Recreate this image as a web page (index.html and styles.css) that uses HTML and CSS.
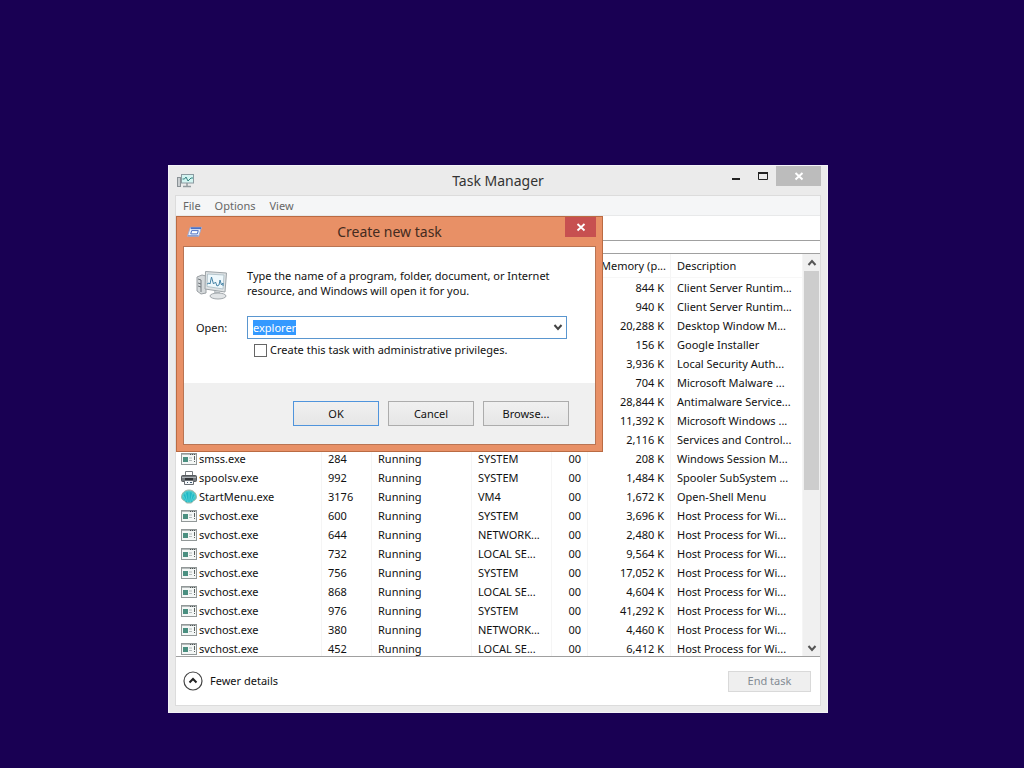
FILE: index.html
```html
<!DOCTYPE html>
<html lang="en">
<head>
<meta charset="utf-8">
<title>Task Manager</title>
<link rel="stylesheet" href="styles.css">
</head>
<body>
<svg class="defs" width="0" height="0" aria-hidden="true">
  <symbol id="app" viewBox="0 0 16 12">
    <rect x="0.5" y="0.5" width="15" height="11" fill="#f4f7f6" stroke="#929898"/>
    <path d="M1 1.500h14" stroke="#b4baba"/>
    <path d="M9 1.500h1M11 1.500h1M13 1.500h1" stroke="#4f5555"/>
    <rect x="2" y="4" width="5" height="5" fill="#4a8f80"/>
    <path d="M8 5h3M8 7.500h3" stroke="#b5bcbc"/>
    <path d="M13.500 3v4M13.500 8v1" stroke="#59605f"/>
  </symbol>
  <symbol id="printer" viewBox="0 0 16 16">
    <path d="M4.500 6V1.500h7V6" fill="#fff" stroke="#777c80"/>
    <rect x="0.500" y="5.500" width="15" height="6" rx="1" fill="#74797d" stroke="#55595d"/>
    <path d="M1 7.500h14" stroke="#b0b5b9"/>
    <path d="M4 9h8" stroke="#303336" stroke-width="2"/>
    <path d="M3.500 10.500h9v4h-9z" fill="#f6f8fa" stroke="#6a6f74"/>
    <path d="M6 12.500h1M9 12.500h2" stroke="#3f5a70"/>
  </symbol>
  <symbol id="shell" viewBox="0 0 16 16">
    <path d="M8 1C4 1 .5 4 .5 8c0 2 1.500 3.500 3.500 4l1.500 2h5l1.500-2c2-.5 3.500-2 3.500-4C15.500 4 12 1 8 1z" fill="#4fc9cb" stroke="#a5b7a8"/>
    <path d="M3 6c2-4 8-4 10 0 1 3 0 5-2 7H5C3 11 2 9 3 6z" fill="#1fb9c6"/>
    <path d="M8 13V3M6.500 13L4.500 4M9.500 13l2-9M5 12L2.500 7M11 12l2.500-5" fill="none" stroke="#72dfdf" stroke-width=".6"/>
  </symbol>
</svg>
<main class="desktop">
  <section class="window" aria-label="Task Manager">
    <header class="titlebar">
      <svg class="title-icon" viewBox="0 0 17 15" aria-hidden="true">
        <rect x=".5" y="4.500" width="3" height="9" fill="#c9ced0" stroke="#8a9296"/>
        <rect x="4.500" y="1.500" width="12" height="8.500" fill="#d3f4f1" stroke="#8b9ba1"/>
        <path d="M5.500 6h2l1.500-2 2 4 2-2 1-1h2" fill="none" stroke="#34817f"/>
        <path d="M10 10v3M6 13.500h8" stroke="#929b9f" stroke-width="1.500"/>
      </svg>
      <h1 class="title">Task Manager</h1>
      <div class="controls">
        <button class="control" aria-label="Minimize"><svg viewBox="0 0 12 10" width="12" height="10"><path d="M2 8h8" stroke="#222" stroke-width="2"/></svg></button>
        <button class="control" aria-label="Maximize"><svg viewBox="0 0 12 10" width="12" height="10"><path d="M1.500 2h9v6.500h-9z" fill="none" stroke="#222"/><path d="M1 2h10" stroke="#222" stroke-width="2"/></svg></button>
        <button class="control control-close" aria-label="Close"><svg viewBox="0 0 10 10" width="10" height="10"><path d="M1.500 2l7 6.500M8.500 2l-7 6.500" stroke="#fff" stroke-width="2"/></svg></button>
      </div>
    </header>
    <div class="client">
      <nav class="menu"><button>File</button><button>Options</button><button>View</button></nav>
      <div class="tabs"></div>
      <div class="spacer"></div>
      <div class="list">
        <div class="list-view">
          <table class="tasks">
            <colgroup><col class="c-name"><col class="c-pid"><col class="c-status"><col class="c-user"><col class="c-cpu"><col class="c-mem"><col></colgroup>
            <thead><tr><th></th><th></th><th></th><th></th><th></th><th class="num">Memory (p...</th><th>Description</th></tr></thead>
            <tbody>
              <tr><td></td><td></td><td></td><td></td><td></td><td class="num">844 K</td><td>Client Server Runtim...</td></tr>
              <tr><td></td><td></td><td></td><td></td><td></td><td class="num">940 K</td><td>Client Server Runtim...</td></tr>
              <tr><td></td><td></td><td></td><td></td><td></td><td class="num">20,288 K</td><td>Desktop Window M...</td></tr>
              <tr><td></td><td></td><td></td><td></td><td></td><td class="num">156 K</td><td>Google Installer</td></tr>
              <tr><td></td><td></td><td></td><td></td><td></td><td class="num">3,936 K</td><td>Local Security Auth...</td></tr>
              <tr><td></td><td></td><td></td><td></td><td></td><td class="num">704 K</td><td>Microsoft Malware ...</td></tr>
              <tr><td></td><td></td><td></td><td></td><td></td><td class="num">28,844 K</td><td>Antimalware Service...</td></tr>
              <tr><td></td><td></td><td></td><td></td><td></td><td class="num">11,392 K</td><td>Microsoft Windows ...</td></tr>
              <tr><td></td><td></td><td></td><td></td><td></td><td class="num">2,116 K</td><td>Services and Control...</td></tr>
              <tr><td><span class="name"><svg><use href="#app"/></svg>smss.exe</span></td><td>284</td><td>Running</td><td>SYSTEM</td><td class="num">00</td><td class="num">208 K</td><td>Windows Session M...</td></tr>
              <tr><td><span class="name"><svg class="tall"><use href="#printer"/></svg>spoolsv.exe</span></td><td>992</td><td>Running</td><td>SYSTEM</td><td class="num">00</td><td class="num">1,484 K</td><td>Spooler SubSystem ...</td></tr>
              <tr><td><span class="name"><svg class="tall"><use href="#shell"/></svg>StartMenu.exe</span></td><td>3176</td><td>Running</td><td>VM4</td><td class="num">00</td><td class="num">1,672 K</td><td>Open-Shell Menu</td></tr>
              <tr><td><span class="name"><svg><use href="#app"/></svg>svchost.exe</span></td><td>600</td><td>Running</td><td>SYSTEM</td><td class="num">00</td><td class="num">3,696 K</td><td>Host Process for Wi...</td></tr>
              <tr><td><span class="name"><svg><use href="#app"/></svg>svchost.exe</span></td><td>644</td><td>Running</td><td>NETWORK...</td><td class="num">00</td><td class="num">2,480 K</td><td>Host Process for Wi...</td></tr>
              <tr><td><span class="name"><svg><use href="#app"/></svg>svchost.exe</span></td><td>732</td><td>Running</td><td>LOCAL SE...</td><td class="num">00</td><td class="num">9,564 K</td><td>Host Process for Wi...</td></tr>
              <tr><td><span class="name"><svg><use href="#app"/></svg>svchost.exe</span></td><td>756</td><td>Running</td><td>SYSTEM</td><td class="num">00</td><td class="num">17,052 K</td><td>Host Process for Wi...</td></tr>
              <tr><td><span class="name"><svg><use href="#app"/></svg>svchost.exe</span></td><td>868</td><td>Running</td><td>LOCAL SE...</td><td class="num">00</td><td class="num">4,604 K</td><td>Host Process for Wi...</td></tr>
              <tr><td><span class="name"><svg><use href="#app"/></svg>svchost.exe</span></td><td>976</td><td>Running</td><td>SYSTEM</td><td class="num">00</td><td class="num">41,292 K</td><td>Host Process for Wi...</td></tr>
              <tr><td><span class="name"><svg><use href="#app"/></svg>svchost.exe</span></td><td>380</td><td>Running</td><td>NETWORK...</td><td class="num">00</td><td class="num">4,460 K</td><td>Host Process for Wi...</td></tr>
              <tr><td><span class="name"><svg><use href="#app"/></svg>svchost.exe</span></td><td>452</td><td>Running</td><td>LOCAL SE...</td><td class="num">00</td><td class="num">6,412 K</td><td>Host Process for Wi...</td></tr>
            </tbody>
          </table>
        </div>
        <div class="scrollbar">
          <button aria-label="Scroll up"><svg viewBox="0 0 10 8" width="10" height="8"><path d="M1.500 6L5 2l3.500 4" fill="none" stroke="#555" stroke-width="2"/></svg></button>
          <div class="thumb"></div>
          <button class="down" aria-label="Scroll down"><svg viewBox="0 0 10 8" width="10" height="8"><path d="M1.500 2L5 6l3.500-4" fill="none" stroke="#555" stroke-width="2"/></svg></button>
        </div>
      </div>
      <footer class="footer">
        <button class="fewer"><svg viewBox="0 0 20 20" width="20" height="20"><circle cx="10" cy="10" r="9" fill="#fff" stroke="#444" stroke-width="1.200"/><path d="M6.500 11.500L10 8l3.500 3.500" fill="none" stroke="#222" stroke-width="2"/></svg>Fewer details</button>
        <button class="end" disabled>End task</button>
      </footer>
    </div>
  </section>

  <section class="dialog" role="dialog" aria-label="Create new task">
    <header class="dialog-bar">
      <svg class="run-icon" viewBox="0 0 16 12" aria-hidden="true">
        <path d="M3.500 1h12l-3 9.500H.5z" fill="#e9f1fc" stroke="#9fa9cf"/>
        <path d="M4 2h11" stroke="#4b70c4" stroke-width="2"/>
        <path d="M5 4.500h7l-1 3.500H4z" fill="#fff" stroke="#4168c0"/>
        <path d="M1 10h11" stroke="#6d87c8"/>
      </svg>
      <h2 class="title">Create new task</h2>
      <button class="dialog-close" aria-label="Close"><svg viewBox="0 0 10 10" width="10" height="10"><path d="M1.500 2l7 6.500M8.500 2l-7 6.500" stroke="#fff" stroke-width="1.800"/></svg></button>
    </header>
    <form class="dialog-client">
      <div class="dialog-body">
        <svg class="monitor" viewBox="0 0 32 30" aria-hidden="true">
          <path d="M1 7l5-2 4 1v17l-5 1-4-3z" fill="#d5d9db" stroke="#9a9fa3"/>
          <path d="M2 9l3 1v12M2 13l3 1M2 16l3 1" fill="none" stroke="#73797e"/>
          <path d="M9.500 1.500l21 1.500-1.500 19-20-3z" fill="#dfe3e5" stroke="#9da4a8"/>
          <path d="M11.500 4l16.500 1-1 14-16-2.500z" fill="#eef8fc" stroke="#b5c5cc"/>
          <path d="M11 14l2-1 1 1 1.500-7 2 7 2-2 1.500 4 2-1 1-5 1.500 5 1.500-2v3" fill="none" stroke="#4683a6"/>
          <path d="M18 21l6 1-.5 4h-5z" fill="#b8bec2"/>
          <ellipse cx="22" cy="26" rx="8" ry="3" fill="#e2e5e7" stroke="#a1a7ab"/>
        </svg>
        <p class="message">Type the name of a program, folder, document, or Internet resource, and Windows will open it for you.</p>
        <label class="open-label" for="open">Open:</label>
        <div class="combo">
          <input id="open" type="text" value="explorer" spellcheck="false" autocomplete="off">
          <button type="button" aria-label="Show history"><svg viewBox="0 0 10 8" width="10" height="8"><path d="M1.500 2L5 6l3.500-4" fill="none" stroke="#444" stroke-width="2"/></svg></button>
        </div>
        <label class="admin"><input type="checkbox">Create this task with administrative privileges.</label>
      </div>
      <div class="actions">
        <button type="button" class="default">OK</button><button type="button">Cancel</button><button type="button">Browse...</button>
      </div>
    </form>
  </section>
</main>
<script src="script.js"></script>
</body>
</html>
```
FILE: styles.css
```css
* { box-sizing: border-box; }
body { margin: 0; background: #190053; color: #111; font: 12px/16px "Noto Sans", "Open Sans", sans-serif; }
button, input { font: inherit; color: inherit; margin: 0; padding: 0; border: 0; background: none; border-radius: 0; }
h1, h2, p { margin: 0; }
svg { display: block; flex: none; }
.defs { position: absolute; }
.desktop { position: relative; min-height: 100vh; overflow: hidden; font-size: 11px; }
.title { font-size: 14px; font-weight: 400; line-height: 20px; }

.window { position: absolute; left: 168px; top: 165px; width: 660px; padding: 0 6px 6px; background: #ebebeb; border: 1px solid #f4f2f8; }
.titlebar { display: grid; grid-template-columns: 1fr auto 1fr; height: 29px; align-items: center; color: #333; }
.title-icon { width: 17px; height: 15px; margin-left: 2px; }
.controls { display: flex; justify-content: flex-end; align-self: start; }
.control { width: 27px; height: 20px; display: grid; place-items: center; }
.control-close { width: 45px; background: #bcbcbc; }
.client { background: #fff; border: 1px solid #dcdcdc; }
.menu { display: flex; gap: 14px; padding: 0 7px; height: 20px; background: #f5f6f7; border-bottom: 1px solid #e8e9ea; color: #666; }
.tabs { height: 25px; border-bottom: 1px solid #a0a0a0; }
.spacer { height: 13px; border-bottom: 1px solid #a0a0a0; }
.list { display: flex; height: 403px; border-bottom: 1px solid #a0a0a0; }
.list-view { flex: 1; overflow: hidden; }
.tasks { width: 100%; table-layout: fixed; border-collapse: separate; border-spacing: 0; white-space: nowrap; }
.c-name { width: 146px; } .c-pid { width: 50px; } .c-status { width: 100px; } .c-user { width: 80px; } .c-cpu { width: 36px; } .c-mem { width: 83px; }
.tasks th, .tasks td { padding: 0 6px; border-right: 1px solid #f5f5f5; text-align: left; font-weight: 400; height: 19px; line-height: 18px; }
.tasks th { height: 24px; border-bottom: 1px solid #f7f7f7; }
.tasks td:first-child { padding: 0 5px; }
.tasks .num { text-align: right; }
.tasks th.num { padding-right: 4px; }
.name { display: flex; align-items: center; gap: 2px; }
.name svg { width: 16px; height: 12px; }
.name .tall { height: 16px; }
.scrollbar { width: 17px; background: #f0f0f0; display: flex; flex-direction: column; }
.scrollbar button { height: 17px; display: grid; place-items: center; }
.thumb { height: 219px; margin: 0 1px; background: #cdcdcd; }
.down { margin-top: auto; }
.footer { display: flex; align-items: center; justify-content: space-between; height: 48px; padding: 0 9px 0 7px; }
.fewer { display: flex; align-items: center; gap: 7px; }
.end { width: 83px; height: 21px; background: #efefef; border: 1px solid #d9d9d9; color: #838b93; }

.dialog { position: absolute; left: 176px; top: 216px; width: 427px; padding: 0 6px 6px; background: #e89066; border: 1px solid #ba6b43; }
.dialog-bar { display: grid; grid-template-columns: 1fr auto 1fr; height: 29px; align-items: center; color: #442b20; }
.run-icon { width: 15px; height: 12px; margin-left: 4px; }
.dialog-close { width: 31px; height: 20px; justify-self: end; align-self: start; display: grid; place-items: center; background: #c75050; }
.dialog-client { border: 1px solid #b97453; background: #fff; }
.dialog-body { display: grid; grid-template-columns: 51px 1fr; padding: 21px 28px 25px 12px; }
.monitor { width: 32px; height: 30px; margin-top: 2px; }
.message { line-height: 15px; }
.open-label { margin-top: 16px; align-self: center; }
.combo { display: flex; align-items: center; height: 23px; margin-top: 16px; padding: 0 3px 1px 5px; border: 1px solid #5a96cf; }
.combo input { flex: 1; min-width: 0; height: 15px; line-height: 15px; outline: 0; }
.combo input::selection { background: #3399ff; color: #fff; }
.admin { grid-column: 2; display: flex; align-items: center; gap: 3px; margin: 3px 0 0 7px; }
.admin input { appearance: none; width: 13px; height: 13px; border: 1px solid #666; background: #fff; }
.actions { display: flex; justify-content: flex-end; gap: 9px; padding: 18px 26px; background: #f0f0f0; }
.actions button { width: 86px; height: 25px; background: linear-gradient(#f0f0f0, #e6e6e6); border: 1px solid #acacac; }
.actions .default { border-color: #4f94dc; }
```
FILE: script.js
```js
const openField = document.getElementById("open");
openField.focus();
openField.select();
```
